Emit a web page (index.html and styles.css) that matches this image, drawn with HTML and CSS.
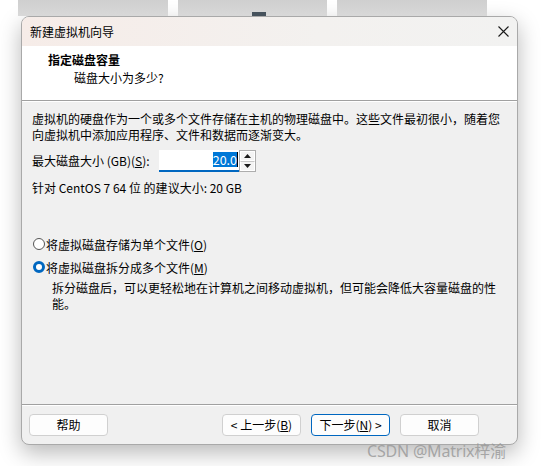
FILE: index.html
```html
<!DOCTYPE html>
<html>
<head>
    <title>新建虚拟机向导</title>
    <link rel="stylesheet" href="styles.css">
</head>
<body>
    <!-- 背后的窗口 -->
    <div class="backdrop">
        <div class="back-tile tile-a"></div>
        <div class="back-tile tile-b"><span class="tile-mark"></span></div>
        <div class="back-tile tile-c"></div>
    </div>

    <div class="dialog">
        <div class="titlebar">
            <span class="title">新建虚拟机向导</span>
            <svg class="close" width="11" height="11" viewBox="0 0 11 11">
                <path d="M0.5 0.5 L10.5 10.5 M10.5 0.5 L0.5 10.5" stroke="#1a1a1a" stroke-width="1.1" fill="none"/>
            </svg>
        </div>

        <div class="header">
            <div class="header-title">指定磁盘容量</div>
            <div class="header-sub">磁盘大小为多少?</div>
        </div>

        <div class="content">
            <p class="intro">虚拟机的硬盘作为一个或多个文件存储在主机的物理磁盘中。这些文件最初很小，随着您<br>向虚拟机中添加应用程序、文件和数据而逐渐变大。</p>

            <div class="size-row">
                <label for="diskSize">最大磁盘大小 (GB)(<u>S</u>):</label>
                <div class="spin">
                    <div class="spin-input"><span class="sel">20.0</span><span class="caret"></span></div>
                    <div class="spin-btns">
                        <div class="spin-btn"><svg width="7" height="4" viewBox="0 0 7 4"><path d="M0 4 L3.5 0 L7 4 Z" fill="#1a1a1a"/></svg></div>
                        <div class="spin-btn"><svg width="7" height="4" viewBox="0 0 7 4"><path d="M0 0 L3.5 4 L7 0 Z" fill="#1a1a1a"/></svg></div>
                    </div>
                </div>
            </div>

            <p class="hint">针对 CentOS 7 64 位 的建议大小: 20 GB</p>

            <div class="options">
                <div class="radio-row">
                    <span class="radio"></span>
                    <span>将虚拟磁盘存储为单个文件(<u>O</u>)</span>
                </div>
                <div class="radio-row">
                    <span class="radio checked"></span>
                    <span>将虚拟磁盘拆分成多个文件(<u>M</u>)</span>
                </div>
                <p class="radio-desc">拆分磁盘后，可以更轻松地在计算机之间移动虚拟机，但可能会降低大容量磁盘的性<br>能。</p>
            </div>
        </div>

        <div class="footer">
            <button class="btn">帮助</button>
            <div class="footer-right">
                <button class="btn">&lt; 上一步(<u>B</u>)</button>
                <button class="btn default">下一步(<u>N</u>) &gt;</button>
                <button class="btn">取消</button>
            </div>
        </div>
    </div>

    <div class="watermark">CSDN @Matrix梓渝</div>
</body>
</html>
```
FILE: styles.css
```css
/* 页面 */
body {
    margin: 0;
    background: #ffffff;
    font-family: "Noto Sans CJK SC", "Noto Sans", sans-serif;
    font-size: 12px;
    color: #000;
    width: 556px;
    height: 466px;
    overflow: hidden;
    position: relative;
}

/* 背后窗口的缩略图 */
.backdrop {
    display: flex;
    gap: 10px;
    height: 16px;
    padding-left: 18px;
}
.back-tile {
    width: 150px;
    height: 16px;
    background: linear-gradient(#cfcfcf, #d8d8d8);
    position: relative;
}
.tile-b {
    width: 149px;
}
.tile-mark {
    position: absolute;
    left: 74px;
    top: 12px;
    width: 14px;
    height: 4px;
    background: #46525c;
}

/* 对话框 */
.dialog {
    margin-left: 21px;
    width: 495px;
    border: 1px solid #a9a9a9;
    border-radius: 8px;
    overflow: hidden;
    background: #f0f0f0;
    box-shadow: 0 8px 22px rgba(0, 0, 0, 0.28);
}
.titlebar {
    height: 29px;
    display: flex;
    align-items: center;
    justify-content: space-between;
    padding: 0 8px 0 8px;
    background: linear-gradient(90deg, #f6ece8, #f3f1ef 60%, #f2f2f1);
    font-size: 12px;
}

.header {
    height: 55px;
    background: #ffffff;
    border-bottom: 1px solid #a0a0a0;
    box-shadow: 0 1px 0 #ffffff;
    padding-left: 26px;
    box-sizing: border-box;
    padding-top: 5px;
}
.header-title {
    font-weight: bold;
    line-height: 18px;
}
.header-sub {
    padding-left: 26px;
    line-height: 18px;
}

.content {
    height: 304px;
    padding: 10px 0 0 10px;
    box-sizing: border-box;
    border-bottom: 1px solid #a0a0a0;
    box-shadow: 0 1px 0 #ffffff;
}
.intro {
    margin: 0;
    line-height: 16px;
    white-space: nowrap;
}
.size-row {
    display: flex;
    align-items: center;
    margin-top: 6px;
    height: 23px;
}
.size-row label {
    width: 127px;
}
.spin {
    display: flex;
}
.spin-input {
    width: 79px;
    height: 20px;
    background: #fff;
    border-bottom: 2px solid #0067c0;
    display: flex;
    justify-content: flex-end;
    align-items: center;
    padding-right: 1px;
    box-sizing: content-box;
}
.sel {
    background: #0078d7;
    color: #fff;
    line-height: 15px;
    font-size: 12.5px;
}
.caret {
    width: 1px;
    height: 15px;
    background: #000;
}
.spin-btns {
    display: flex;
    flex-direction: column;
    border: 1px solid #adadad;
    width: 15px;
    height: 20px;
    background: #f4f4f4;
}
.spin-btn {
    flex: 1;
    display: flex;
    align-items: center;
    justify-content: center;
    border: 1px solid #ffffff;
}
.spin-btn + .spin-btn {
    border-top: 1px solid #c8c8c8;
}
.hint {
    margin: 8px 0 0 0;
    line-height: 16px;
}

/* 单选按钮 */
.options {
    margin-top: 40px;
}
.radio-row {
    display: flex;
    align-items: center;
    height: 16px;
    margin-bottom: 7px;
}
.radio {
    width: 12px;
    height: 12px;
    border: 1px solid #555;
    border-radius: 50%;
    background: #fff;
    margin: 0 1px 0 1px;
    box-sizing: border-box;
}
.radio.checked {
    border: 3.5px solid #0067c0;
    background: #fff;
}
.radio-desc {
    margin: -2px 0 0 20px;
    line-height: 16px;
}

/* 底部按钮 */
.footer {
    height: 39px;
    display: flex;
    align-items: center;
    justify-content: space-between;
    padding: 0 38px 0 7px;
}
.footer-right {
    display: flex;
    gap: 10px;
}
.btn {
    width: 79px;
    height: 22px;
    padding: 0;
    background: #fdfdfd;
    border: 1px solid #d0d0d0;
    border-radius: 4px;
    font-family: "Noto Sans CJK SC", "Noto Sans", sans-serif;
    font-size: 12px;
    color: #000;
}
.btn.default {
    border-color: #0067c0;
}

/* 水印 */
.watermark {
    position: absolute;
    left: 367px;
    top: 438px;
    font-family: "Noto Sans", "Noto Sans CJK SC", sans-serif;
    font-size: 16px;
    color: rgba(150, 150, 150, 0.8);
    letter-spacing: -0.2px;
}
```
